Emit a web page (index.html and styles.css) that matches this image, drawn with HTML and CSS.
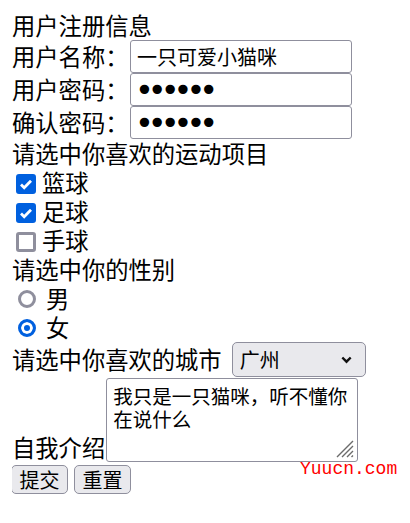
FILE: index.html
```html
<!DOCTYPE html>
<html lang="zh-CN">
<head>
    <meta charset="UTF-8">
    <meta name="viewport" content="width=device-width, initial-scale=1.0">
    <title>用户注册信息</title>
    <link rel="stylesheet" href="styles.css">
</head>
<body>

<form class="reg-form">
    <div class="line">用户注册信息</div>

    <div class="field">
        <label for="username">用户名称：</label>
        <input type="text" id="username" class="text-input" value="一只可爱小猫咪">
    </div>
    <div class="field">
        <label for="password">用户密码：</label>
        <input type="password" id="password" class="text-input pwd" value="123456">
    </div>
    <div class="field">
        <label for="confirm">确认密码：</label>
        <input type="password" id="confirm" class="text-input pwd" value="123456">
    </div>

    <div class="line">请选中你喜欢的运动项目</div>
    <label class="option"><input type="checkbox" class="check" name="sport" checked>篮球</label>
    <label class="option"><input type="checkbox" class="check" name="sport" checked>足球</label>
    <label class="option"><input type="checkbox" class="check" name="sport">手球</label>

    <div class="line">请选中你的性别</div>
    <label class="option"><input type="radio" class="radio" name="sex">男</label>
    <label class="option"><input type="radio" class="radio" name="sex" checked>女</label>

    <div class="field city-row">
        <label for="city">请选中你喜欢的城市</label>
        <select id="city" class="city">
            <option>北京</option>
            <option>上海</option>
            <option selected>广州</option>
            <option>深圳</option>
        </select>
    </div>

    <div class="field intro-row">
        <label for="intro">自我介绍</label>
        <span class="intro-box">
            <textarea id="intro" class="intro">我只是一只猫咪，听不懂你在说什么</textarea>
            <svg class="grip" viewBox="0 0 20 20" aria-hidden="true">
                <path d="M19 3L3 19M19 8L8 19M19 13L13 19M19 17.5L17.5 19" stroke="#6b6b6b" stroke-width="1.4" fill="none"/>
            </svg>
        </span>
    </div>

    <div class="actions">
        <button type="submit">提交</button>
        <button type="reset">重置</button>
    </div>
</form>

<div class="watermark">Yuucn.com</div>

</body>
</html>
```

FILE: styles.css
```css
body {
    margin: 11px 12px;
    font-family: "Noto Sans CJK SC", sans-serif;
    font-size: 23.3px;
    line-height: 29px;
    color: #000;
    background: #fff;
}
.line {
    height: 29px;
}
.field {
    display: flex;
    align-items: center;
}
.text-input {
    width: 222px;
    height: 33px;
    box-sizing: border-box;
    margin: 0 0 0 1.5px;
    padding: 0 6px;
    border: 1px solid #8f8f9d;
    border-radius: 3px;
    font: 20px "Noto Sans CJK SC", sans-serif;
    color: #000;
    background: #fff;
}
.pwd {
    padding-left: 4px;
    font: 32px "DejaVu Sans", sans-serif;
    letter-spacing: -6px;
}
.option {
    display: flex;
    align-items: center;
    height: 29px;
}
.check {
    appearance: none;
    flex: none;
    width: 20px;
    height: 20px;
    box-sizing: border-box;
    margin: 2px 6px 0 4px;
    border: 3px solid #8f8f9d;
    border-radius: 3px;
    background: #fff;
}
.check:checked {
    border-color: #0060df;
    background: #0060df url("data:image/svg+xml,%3Csvg xmlns='http://www.w3.org/2000/svg' viewBox='0 0 16 16'%3E%3Cpath d='M3 8.5l3.2 3.2L13 4.8' fill='none' stroke='%23fff' stroke-width='2.8'/%3E%3C/svg%3E") center / 16px no-repeat;
}
.radio {
    appearance: none;
    flex: none;
    width: 18px;
    height: 18px;
    box-sizing: border-box;
    margin: 1px 10px 0 6px;
    border: 3px solid #8f8f9d;
    border-radius: 50%;
    background: #fff;
}
.radio:checked {
    border-color: #0060df;
    background: #0060df;
    box-shadow: inset 0 0 0 3px #fff;
}
.city-row {
    height: 35px;
}
.city {
    appearance: none;
    width: 134px;
    height: 35px;
    margin-left: 10px;
    padding: 0 7px;
    border: 1px solid #8f8f9d;
    border-radius: 5px;
    font: 20px "Noto Sans CJK SC", sans-serif;
    color: #000;
    background: #e9e9ed url("data:image/svg+xml,%3Csvg xmlns='http://www.w3.org/2000/svg' viewBox='0 0 11 8'%3E%3Cpath d='M1.3 1.5l4.2 4.2 4.2-4.2' fill='none' stroke='%23111' stroke-width='2.4'/%3E%3C/svg%3E") right 13px center / 11px 8px no-repeat;
}
.intro-row {
    align-items: flex-end;
    margin-top: 1px;
}
.intro-box {
    position: relative;
    display: flex;
    margin-left: 1px;
}
.intro {
    width: 252px;
    height: 84px;
    box-sizing: border-box;
    margin: 0;
    padding: 5px 6px;
    border: 1px solid #8f8f9d;
    border-radius: 3px;
    font: 19.5px/23px "Noto Sans CJK SC", sans-serif;
    color: #000;
    resize: none;
}
.grip {
    position: absolute;
    right: 4px;
    bottom: 4px;
    width: 20px;
    height: 20px;
}
.actions {
    display: flex;
    gap: 6px;
    margin: 3px 0 0 -1px;
}
button {
    height: 29px;
    padding: 0 7.5px;
    border: 1px solid #8f8f9d;
    border-radius: 5px;
    background: #e9e9ed;
    font: 20px/27px "Noto Sans CJK SC", sans-serif;
    color: #000;
}
.watermark {
    position: absolute;
    left: 300px;
    top: 459px;
    font: 18px/20px "Liberation Mono", monospace;
    color: #f00;
}
```
